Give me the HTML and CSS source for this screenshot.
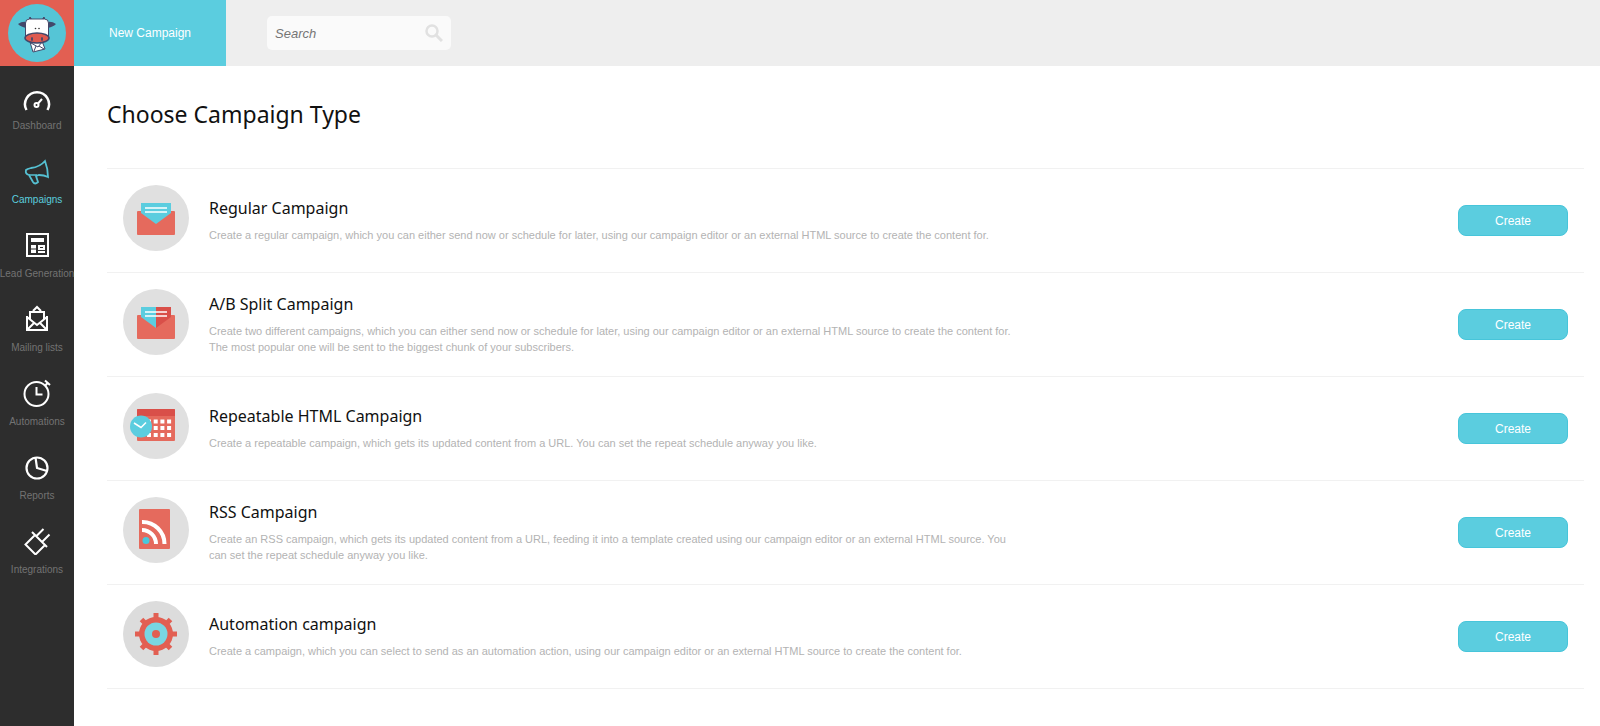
FILE: index.html
```html
<!DOCTYPE html>
<html lang="en">
<head>
    <meta charset="UTF-8">
    <meta name="viewport" content="width=device-width, initial-scale=1.0">
    <title>Choose Campaign Type</title>
    <link rel="stylesheet" href="styles.css">
</head>
<body>
    <aside class="sidebar">
        <a href="#" class="logo" aria-label="Home">
            <svg width="58" height="58" viewBox="0 0 58 58">
                <circle cx="29" cy="29" r="29" fill="#55c5d6"/>
                <!-- ears and horns -->
                <path d="M10 20q4-3 9-2v6q-6-1-9-4zM48 20q-4-3-9-2v6q6-1 9-4z" fill="#43486a"/>
                <path d="M22 13l2 3h-3zM36 13l-2 3h3z" fill="#43486a" stroke="#43486a"/>
                <!-- letter in the mouth -->
                <path d="M22 38l12-1 3 8-12 3z" fill="#fff" stroke="#43486a"/>
                <path d="M23 39l7 4 4-5M26 47l2-5M36 45l-5-3" fill="none" stroke="#43486a"/>
                <path d="M17.500 34V19q0-4 4-4h15q4 0 4 4v15z" fill="#fff" stroke="#43486a"/>
                <ellipse cx="29" cy="34" rx="12" ry="5" fill="#de5a50" stroke="#43486a" stroke-width="1.500"/>
                <ellipse cx="24" cy="35" rx="1" ry="2" fill="#43486a"/>
                <ellipse cx="34" cy="35" rx="1" ry="2" fill="#43486a"/>
                <circle cx="27.500" cy="24.500" r="0.800" fill="#333"/>
                <circle cx="31" cy="24.500" r="0.800" fill="#333"/>
            </svg>
        </a>
        <nav>
            <a href="#">
                <svg width="28" height="28" viewBox="0 0 28 28">
                    <path d="M3.500 27A12 12 0 1 1 24.500 27" stroke-width="2.500"/>
                    <circle cx="13.500" cy="22" r="2" stroke-width="2"/>
                    <path d="M15 20.500L19 16" stroke-width="2"/>
                </svg>
                <span>Dashboard</span>
            </a>
            <a href="#" class="active">
                <svg width="28" height="28" viewBox="0 0 28 28">
                    <path d="M22 4q3 8 3 16q-4-2-9-2l-3 1 2 6q-3 3-5 0l-4-7q-4-1-3-5 1-1 5-2 9-1 14-7z" stroke-width="1.800"/>
                    <path d="M6 18l8 0" stroke-width="1.500"/>
                </svg>
                <span>Campaigns</span>
            </a>
            <a href="#">
                <svg width="28" height="28" viewBox="0 0 28 28">
                    <rect x="4" y="3" width="21" height="22" stroke-width="2"/>
                    <path d="M8 9h13M8 16h5M8 20h5" stroke-width="4"/>
                    <path d="M8 18h5" stroke="#2d2d2d" stroke-width="1"/>
                    <rect x="16" y="15" width="5" height="3" stroke-width="2"/>
                    <path d="M15 21h7" stroke-width="2"/>
                </svg>
                <span>Lead Generation</span>
            </a>
            <a href="#">
                <svg width="28" height="28" viewBox="0 0 28 28">
                    <path d="M4 11v14h20V11M7 14V7h14v7M10 6l4-4 4 4" stroke-width="2"/>
                    <path d="M4 12l10 8 10-8M4 25l7-7M24 25l-7-7" stroke-width="2"/>
                </svg>
                <span>Mailing lists</span>
            </a>
            <a href="#">
                <svg width="28" height="28" viewBox="0 0 28 28">
                    <circle cx="13.500" cy="15" r="12" stroke-width="2"/>
                    <path d="M13.500 8v7.500h6" stroke-width="2"/>
                    <path d="M22 1.500l5 4.500M22 7l2.500-3" stroke-width="2"/>
                </svg>
                <span>Automations</span>
            </a>
            <a href="#">
                <svg width="28" height="28" viewBox="0 0 28 28">
                    <circle cx="14" cy="15" r="10.500" stroke-width="2.200"/>
                    <path d="M12.500 4.500L14 15l10 3" stroke-width="2.200"/>
                </svg>
                <span>Reports</span>
            </a>
            <a href="#">
                <svg width="28" height="28" viewBox="0 0 28 28">
                    <path d="M9 5l15 15M12 8L2.500 17.500l10 10L22 18M13.500 9l7-7M19.500 14.500l7-7" stroke-width="2"/>
                </svg>
                <span>Integrations</span>
            </a>
        </nav>
    </aside>

    <div class="page">
        <header>
            <a href="#" class="new-campaign">New Campaign</a>
            <form class="search">
                <input type="search" placeholder="Search" aria-label="Search">
                <button type="submit" aria-label="Search">
                    <svg width="18" height="18" viewBox="0 0 18 18" fill="none" stroke="#e1e1e1">
                        <circle cx="7" cy="7" r="5.500" stroke-width="2.500"/>
                        <path d="M11 11l6 6" stroke-width="3"/>
                    </svg>
                </button>
            </form>
        </header>

        <main>
            <h1>Choose Campaign Type</h1>
            <ul class="types">
                <li>
                    <svg class="type-icon" viewBox="0 0 66 66">
                        <circle cx="33" cy="33" r="33" fill="#e0e0e0"/>
                        <rect x="14" y="26" width="38" height="24" rx="1" fill="#e56a5d"/>
                        <path d="M18 18h30v10L33 39 18 28z" fill="#5bcddf"/>
                        <path d="M22 23h22M22 27h22" stroke="#fff" stroke-width="1.500"/>
                    </svg>
                    <div class="type-text">
                        <h2>Regular Campaign</h2>
                        <p>Create a regular campaign, which you can either send now or schedule for later, using our campaign editor or an external HTML source to create the content for.</p>
                    </div>
                    <button type="button">Create</button>
                </li>
                <li>
                    <svg class="type-icon" viewBox="0 0 66 66">
                        <circle cx="33" cy="33" r="33" fill="#e0e0e0"/>
                        <rect x="14" y="26" width="38" height="24" rx="1" fill="#e56a5d"/>
                        <path d="M18 18h15v21L18 28z" fill="#5bcddf"/>
                        <path d="M33 18h15v10L33 39z" fill="#d94f49"/>
                        <path d="M22 23h22M22 27h22" stroke="#fff" stroke-width="1.500"/>
                    </svg>
                    <div class="type-text">
                        <h2>A/B Split Campaign</h2>
                        <p>Create two different campaigns, which you can either send now or schedule for later, using our campaign editor or an external HTML source to create the content for.<br>The most popular one will be sent to the biggest chunk of your subscribers.</p>
                    </div>
                    <button type="button">Create</button>
                </li>
                <li>
                    <svg class="type-icon" viewBox="0 0 66 66">
                        <circle cx="33" cy="33" r="33" fill="#e0e0e0"/>
                        <rect x="14" y="16" width="38" height="32" rx="1" fill="#e56a5d"/>
                        <path d="M14 23v-6q0-1 1-1h36q1 0 1 1v6z" fill="#d94f49"/>
                        <path d="M24 28.500h26M24 35h26M24 42h26" stroke="#fff" stroke-width="4" stroke-dasharray="4 2.700"/>
                        <circle cx="18" cy="33.500" r="11" fill="#5bcddf"/>
                        <path d="M11 30l7 4.500 5-5" fill="none" stroke="#fff" stroke-width="1.500"/>
                    </svg>
                    <div class="type-text">
                        <h2>Repeatable HTML Campaign</h2>
                        <p>Create a repeatable campaign, which gets its updated content from a URL. You can set the repeat schedule anyway you like.</p>
                    </div>
                    <button type="button">Create</button>
                </li>
                <li>
                    <svg class="type-icon" viewBox="0 0 66 66">
                        <circle cx="33" cy="33" r="33" fill="#e0e0e0"/>
                        <rect x="16" y="12" width="31" height="40" rx="1" fill="#e56a5d"/>
                        <path d="M19 25a22 22 0 0 1 22.500 22M19 33a14 14 0 0 1 14 14" fill="none" stroke="#fff" stroke-width="4"/>
                        <circle cx="23" cy="43.500" r="3.500" fill="#4ac8dc"/>
                    </svg>
                    <div class="type-text">
                        <h2>RSS Campaign</h2>
                        <p>Create an RSS campaign, which gets its updated content from a URL, feeding it into a template created using our campaign editor or an external HTML source. You can set the repeat schedule anyway you like.</p>
                    </div>
                    <button type="button">Create</button>
                </li>
                <li>
                    <svg class="type-icon" viewBox="0 0 66 66">
                        <circle cx="33" cy="33" r="33" fill="#dcdcdc"/>
                        <path d="M33 12v42M12 33h42M18.500 18.500l29 29M47.500 18.500l-29 29" stroke="#e25f52" stroke-width="5"/>
                        <circle cx="33" cy="33" r="17" fill="#e25f52"/>
                        <circle cx="33" cy="33" r="11.500" fill="#79d6e2"/>
                        <circle cx="33" cy="33" r="4" fill="#e25f52"/>
                    </svg>
                    <div class="type-text">
                        <h2>Automation campaign</h2>
                        <p>Create a campaign, which you can select to send as an automation action, using our campaign editor or an external HTML source to create the content for.</p>
                    </div>
                    <button type="button">Create</button>
                </li>
            </ul>
        </main>
    </div>
</body>
</html>
```
FILE: styles.css
```css
* { box-sizing: border-box; }
body { margin: 0; display: flex; min-height: 100vh; background: #fff; font-family: "Liberation Sans", Arial, sans-serif; font-size: 11px; }
a { text-decoration: none; }
button { border: none; cursor: pointer; font-family: inherit; }

/* Sidebar */
.sidebar { width: 74px; flex-shrink: 0; background: #2d2d2d; }
.logo { display: flex; align-items: center; justify-content: center; height: 66px; background: #e25f52; }
.sidebar nav { padding-top: 14px; }
.sidebar nav a { display: flex; flex-direction: column; align-items: center; height: 74px; padding-top: 3px; color: #737373; font-size: 10px; line-height: 12px; white-space: nowrap; }
.sidebar nav svg { margin-bottom: 9px; fill: none; stroke: #fff; }
.sidebar nav .active { color: #5bcddf; }
.sidebar nav .active svg { stroke: #55c0d2; }

/* Top bar */
.page { flex: 1; min-width: 0; }
header { display: flex; align-items: center; height: 66px; background: #eee; }
.new-campaign { display: flex; align-items: center; justify-content: center; width: 152px; height: 66px; background: #5bcddf; color: #fff; font-size: 12px; }
.search { display: flex; align-items: center; width: 184px; height: 34px; margin-left: 41px; padding: 0 8px; border-radius: 5px; background: #fafafa; }
.search input { flex: 1; min-width: 0; padding: 0; border: none; outline: none; background: none; font-family: inherit; font-size: 13px; font-style: italic; }
.search input::placeholder { color: #757575; }
.search button { display: flex; padding: 0; background: none; }

/* Campaign types */
main { padding: 32px 16px 32px 33px; }
h1 { margin: 0 0 38px; color: #111; font-family: "Noto Sans", sans-serif; font-size: 23px; font-weight: 400; line-height: 32px; }
.types { margin: 0; padding: 0; border-top: 1px solid #f1f1f1; list-style: none; }
.types li { display: flex; align-items: center; min-height: 104px; padding: 0 16px; border-bottom: 1px solid #f1f1f1; }
.type-icon { width: 66px; height: 66px; flex-shrink: 0; margin: 0 20px 5px 0; }
.type-text { max-width: 816px; margin: 0 auto 2px 0; }
h2 { margin: 0 0 7px; color: #111; font-family: "Noto Sans", sans-serif; font-size: 16px; font-weight: 400; line-height: 24px; }
p { margin: 0; color: #b3b3b3; line-height: 16px; }
.types button { width: 110px; height: 31px; flex-shrink: 0; border: 1px solid #47c5da; border-radius: 8px; background: #5bcddf; color: #fff; font-size: 12px; }
```
